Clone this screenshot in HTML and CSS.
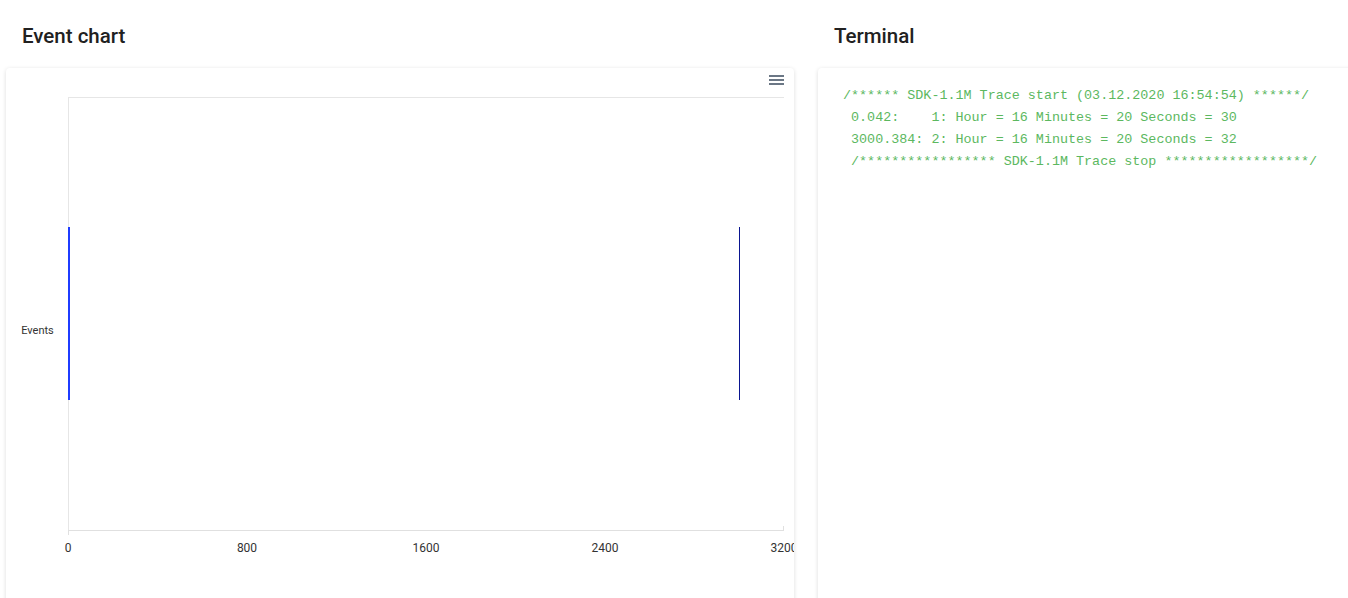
FILE: index.html
```html
<!DOCTYPE html>
<html>
<head>
<meta charset="utf-8">
<link rel="stylesheet" href="styles.css">
</head>
<body>
<div class="page">
  <section class="col col-chart">
    <h2 class="title">Event chart</h2>
    <div class="card chart-card">
      <svg class="chart" width="788" height="540" viewBox="0 0 788 540">
        <g class="menu">
          <rect x="763" y="7" width="15" height="2" fill="#6b7785"/>
          <rect x="763" y="11" width="15" height="2" fill="#6b7785"/>
          <rect x="763" y="15" width="15" height="2" fill="#6b7785"/>
        </g>
        <line x1="62" y1="29.5" x2="778" y2="29.5" stroke="#e6e6e6" stroke-width="1"/>
        <line x1="62.5" y1="29" x2="62.5" y2="462" stroke="#e6e6e6" stroke-width="1"/>
        <line x1="62" y1="462.5" x2="778" y2="462.5" stroke="#e0e0e0" stroke-width="1"/>
        <line x1="62.5" y1="462" x2="62.5" y2="467" stroke="#e0e0e0" stroke-width="1"/>
        <line x1="777.5" y1="458" x2="777.5" y2="463" stroke="#e0e0e0" stroke-width="1"/>
        <rect x="62" y="159" width="2" height="173" fill="#1f3cff"/>
        <rect x="733" y="159" width="1" height="173" fill="#0a1590"/>
        <text class="ylabel" x="31.5" y="266" text-anchor="middle">Events</text>
        <text class="xlabel" x="62" y="484" text-anchor="middle">0</text>
        <text class="xlabel" x="241" y="484" text-anchor="middle">800</text>
        <text class="xlabel" x="420" y="484" text-anchor="middle">1600</text>
        <text class="xlabel" x="599" y="484" text-anchor="middle">2400</text>
        <text class="xlabel" x="778" y="484" text-anchor="middle">3200</text>
      </svg>
    </div>
  </section>
  <section class="col col-term">
    <h2 class="title">Terminal</h2>
    <div class="card term-card">
<pre class="term">/****** SDK-1.1M Trace start (03.12.2020 16:54:54) ******/
 0.042:    1: Hour = 16 Minutes = 20 Seconds = 30
 3000.384: 2: Hour = 16 Minutes = 20 Seconds = 32
 /***************** SDK-1.1M Trace stop ******************/</pre>
    </div>
  </section>
</div>
</body>
</html>
```

FILE: styles.css
```css
html, body {
  margin: 0;
  padding: 0;
  background: #ffffff;
  overflow: hidden;
  height: 598px;
}
.page {
  display: flex;
  gap: 24px;
  padding: 0 6px;
  width: 1400px;
}
.col {
  display: flex;
  flex-direction: column;
}
.col-chart { width: 788px; }
.col-term { width: 560px; }
.title {
  margin: 0;
  padding: 24px 16px 20px;
  font-family: Roboto, "Liberation Sans", sans-serif;
  font-size: 20.5px;
  font-weight: 500;
  line-height: 24px;
  color: #212121;
}
.card {
  background: #fff;
  border-radius: 4px;
  box-shadow: 0 1px 4px rgba(0, 0, 0, 0.14);
  height: 560px;
  overflow: hidden;
}
.chart { display: block; }
.ylabel {
  font-family: Roboto, "Liberation Sans", sans-serif;
  font-size: 11px;
  fill: #333;
}
.xlabel {
  font-family: Roboto, "Liberation Sans", sans-serif;
  font-size: 12px;
  fill: #333;
}
.term-card {
  padding: 17px 25px;
  box-sizing: border-box;
}
.term {
  margin: 0;
  font-family: "Liberation Mono", "Courier New", monospace;
  font-size: 13.4px;
  line-height: 22px;
  color: #5cb85f;
  white-space: pre;
}
```
